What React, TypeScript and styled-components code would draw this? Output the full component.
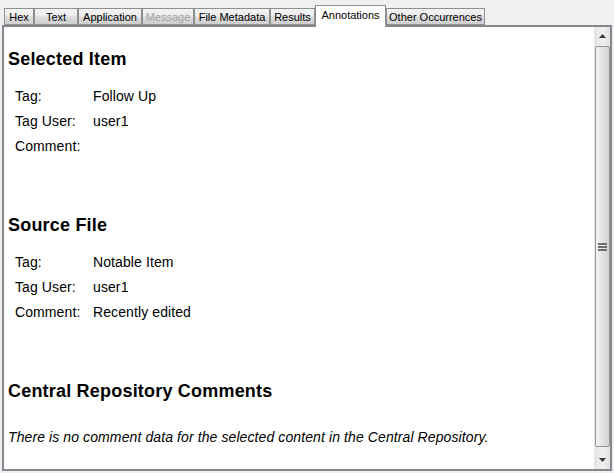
import styled, { createGlobalStyle } from 'styled-components';

type Tab = { label: string; width: number; disabled?: boolean; selected?: boolean };

const tabs: Tab[] = [
  { label: 'Hex', width: 30 },
  { label: 'Text', width: 44 },
  { label: 'Application', width: 64 },
  { label: 'Message', width: 52, disabled: true },
  { label: 'File Metadata', width: 76 },
  { label: 'Results', width: 45 },
  { label: 'Annotations', width: 71, selected: true },
  { label: 'Other Occurrences', width: 99 },
];

type Field = { label: string; value: string };

const selectedItem: Field[] = [
  { label: 'Tag:', value: 'Follow Up' },
  { label: 'Tag User:', value: 'user1' },
  { label: 'Comment:', value: '' },
];

const sourceFile: Field[] = [
  { label: 'Tag:', value: 'Notable Item' },
  { label: 'Tag User:', value: 'user1' },
  { label: 'Comment:', value: 'Recently edited' },
];

const FieldTable = ({ fields }: { fields: Field[] }) => (
  <Table>
    {fields.map((f) => (
      <Row key={f.label}>
        <Label>{f.label}</Label>
        <Value>{f.value}</Value>
      </Row>
    ))}
  </Table>
);

export default function App() {
  return (
    <>
      <GlobalStyle />
      <Window>
        <TabBar>
          {tabs.map((t) => (
            <TabButton key={t.label} $width={t.width} $selected={t.selected} $disabled={t.disabled}>
              {t.label}
            </TabButton>
          ))}
        </TabBar>

        <Panel>
          <Content>
            <Heading>Selected Item</Heading>
            <FieldTable fields={selectedItem} />

            <Heading $gap={56}>Source File</Heading>
            <FieldTable fields={sourceFile} />

            <Heading $gap={56}>Central Repository Comments</Heading>
            <Note>There is no comment data for the selected content in the Central Repository.</Note>
          </Content>

          <Scrollbar>
            <ArrowButton>
              <svg width="7" height="4" viewBox="0 0 7 4">
                <path d="M3.5 0 L7 4 L0 4 Z" fill="#3c3c3c" />
              </svg>
            </ArrowButton>
            <Thumb>
              <svg width="9" height="8" viewBox="0 0 9 8">
                <rect x="0" y="0" width="9" height="2" fill="#6e6e6e" />
                <rect x="0" y="3" width="9" height="2" fill="#6e6e6e" />
                <rect x="0" y="6" width="9" height="2" fill="#6e6e6e" />
              </svg>
            </Thumb>
            <ArrowButton>
              <svg width="7" height="4" viewBox="0 0 7 4">
                <path d="M0 0 L7 0 L3.5 4 Z" fill="#3c3c3c" />
              </svg>
            </ArrowButton>
          </Scrollbar>
        </Panel>
      </Window>
    </>
  );
}

const GlobalStyle = createGlobalStyle`
  html, body {
    margin: 0;
    padding: 0;
    background: #f0f0f0;
  }
  body {
    font-family: "Liberation Sans", Arial, sans-serif;
  }
`;

const Window = styled.div`
  width: 614px;
  height: 473px;
  display: flex;
  flex-direction: column;
  background: #f0f0f0;
  box-sizing: border-box;
  padding-top: 5px;
`;

const TabBar = styled.div`
  display: flex;
  align-items: flex-end;
  height: 20px;
  padding-left: 4px;
  position: relative;
  z-index: 1;
`;

const TabButton = styled.div<{ $width: number; $selected?: boolean; $disabled?: boolean }>`
  box-sizing: border-box;
  width: ${(p) => p.$width}px;
  height: ${(p) => (p.$selected ? 22 : 17)}px;
  margin-bottom: ${(p) => (p.$selected ? -2 : 0)}px;
  display: flex;
  align-items: center;
  justify-content: center;
  padding-bottom: ${(p) => (p.$selected ? 4 : 0)}px;
  font-family: "Liberation Sans", Arial, sans-serif;
  font-size: 11px;
  white-space: nowrap;
  color: ${(p) => (p.$disabled ? '#a3a3a3' : '#000')};
  border: 1px solid #8e8f8f;
  border-bottom: ${(p) => (p.$selected ? 'none' : '1px solid #8e8f8f')};
  background: ${(p) =>
    p.$selected ? '#ffffff' : 'linear-gradient(to bottom, #f3f3f3 0%, #ebebeb 45%, #dcdcdc 55%, #cfcfcf 100%)'};
`;

const Panel = styled.div`
  flex: 1;
  display: flex;
  margin: 0 2px 2px 2px;
  border: 2px solid #828790;
  background: #ffffff;
  min-height: 0;
`;

const Content = styled.div`
  flex: 1;
  padding: 21px 0 0 4px;
  color: #000;
`;

const Heading = styled.h2<{ $gap?: number }>`
  margin: ${(p) => p.$gap ?? 0}px 0 0 0;
  font-size: 18px;
  line-height: 22px;
  font-weight: bold;
  letter-spacing: 0.2px;
`;

const Table = styled.div`
  display: flex;
  flex-direction: column;
  margin: 13px 0 0 7px;
`;

const Row = styled.div`
  display: flex;
  height: 25px;
  align-items: center;
  font-size: 14px;
  letter-spacing: 0.1px;
`;

const Label = styled.span`
  width: 78px;
`;

const Value = styled.span`
  flex: 1;
`;

const Note = styled.p`
  margin: 27px 0 0 0;
  font-size: 14px;
  line-height: 17px;
  font-style: italic;
  letter-spacing: 0.1px;
`;

const Scrollbar = styled.div`
  width: 15px;
  display: flex;
  flex-direction: column;
  background: linear-gradient(to right, #e3e3e3, #f0f0f0 50%, #e3e3e3);
  border-left: 1px solid #e8e8e8;
`;

const ArrowButton = styled.div`
  height: 18px;
  display: flex;
  align-items: center;
  justify-content: center;
`;

const Thumb = styled.div`
  flex: 1;
  margin: 1px 0 4px 0;
  box-sizing: border-box;
  border: 1px solid #979797;
  border-radius: 2px;
  background: linear-gradient(to right, #f2f2f2, #e4e4e4 50%, #d2d2d2);
  display: flex;
  align-items: center;
  justify-content: center;
`;
